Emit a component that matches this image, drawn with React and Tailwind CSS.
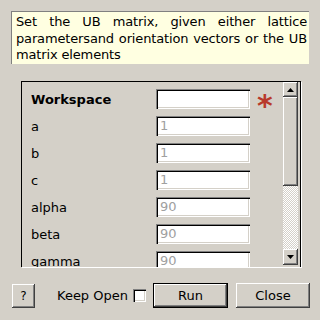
import React from "react";

const raised =
  "bg-[#d4d0c8] shadow-[inset_-1px_-1px_#404040,inset_1px_1px_#ffffff,inset_-2px_-2px_#808080]";
const sunken =
  "bg-white shadow-[inset_1px_1px_#808080,inset_2px_2px_#000000,inset_-1px_-1px_#ffffff,inset_-2px_-2px_#d4d0c8]";

const rows = [
  { label: "Workspace", value: "", bold: true, required: true },
  { label: "a", value: "1" },
  { label: "b", value: "1" },
  { label: "c", value: "1" },
  { label: "alpha", value: "90" },
  { label: "beta", value: "90" },
  { label: "gamma", value: "90" },
];

const Arrow = ({ up }) => (
  <svg width="7" height="4" viewBox="0 0 7 4">
    <path d={up ? "M3.5 0 L7 4 L0 4 Z" : "M0 0 L7 0 L3.5 4 Z"} fill="#000" />
  </svg>
);

const App = () => {
  return (
    <div className="w-[320px] h-[320px] bg-[#d4d0c8] font-['DejaVu_Sans',sans-serif] text-[13px] text-black flex flex-col overflow-hidden">
      {/* description */}
      <div className="mx-[11px] mt-[11px] h-[53px] bg-[#ffffe1] border-t border-l border-[#808080] pl-[4px] pr-[2px] pt-[2px] leading-[16.5px] text-justify tracking-[-0.15px]">
        Set the UB matrix, given either lattice parametersand orientation vectors or the UB matrix elements
      </div>

      {/* property frame */}
      <div className="ml-[21px] mt-[17px] w-[280px] h-[186px] border-t border-l border-r border-black shadow-[1px_1px_#ffffff] flex">
        <div className="flex-1 overflow-hidden flex flex-col gap-[7px] pt-[7px] pl-[9px]">
          {rows.map((r) => (
            <div key={r.label} className="flex items-center h-[20px] shrink-0">
              <div className={`w-[125px] pt-[1px] ${r.bold ? "font-bold" : ""}`}>{r.label}</div>
              <div className={`w-[94px] h-[20px] ${sunken} pl-[4px] flex items-center text-[#a0a0a0]`}>
                {r.value}
              </div>
              {r.required && (
                <div className="ml-[7px] text-[#b8392b] text-[30px] leading-none font-bold h-[20px] mt-[3px]">*</div>
              )}
            </div>
          ))}
        </div>
        {/* scrollbar */}
        <div className="w-[15px] mr-[2px] mb-[2px] flex flex-col">
          <div className={`h-[15px] ${raised} flex items-center justify-center`}>
            <Arrow up />
          </div>
          <div className={`h-[89px] ${raised}`}></div>
          <div className="flex-1 bg-[repeating-conic-gradient(#ffffff_0_25%,#d4d0c8_0_50%)] bg-[length:2px_2px]"></div>
          <div className={`h-[16px] ${raised} flex items-center justify-center`}>
            <Arrow />
          </div>
        </div>
      </div>

      {/* buttons */}
      <div className="flex items-center mt-[16px] h-[25px]">
        <button className={`ml-[12px] w-[23px] h-[24px] ${raised} text-[12px]`}>?</button>
        <span className="ml-[22px]">Keep Open</span>
        <div className={`ml-[5px] w-[13px] h-[13px] ${sunken}`}></div>
        <button className={`ml-[7px] w-[75px] h-[25px] border border-black ${raised}`}>Run</button>
        <button className={`ml-[8px] w-[74px] h-[25px] ${raised}`}>Close</button>
      </div>
    </div>
  );
};

export default App;
